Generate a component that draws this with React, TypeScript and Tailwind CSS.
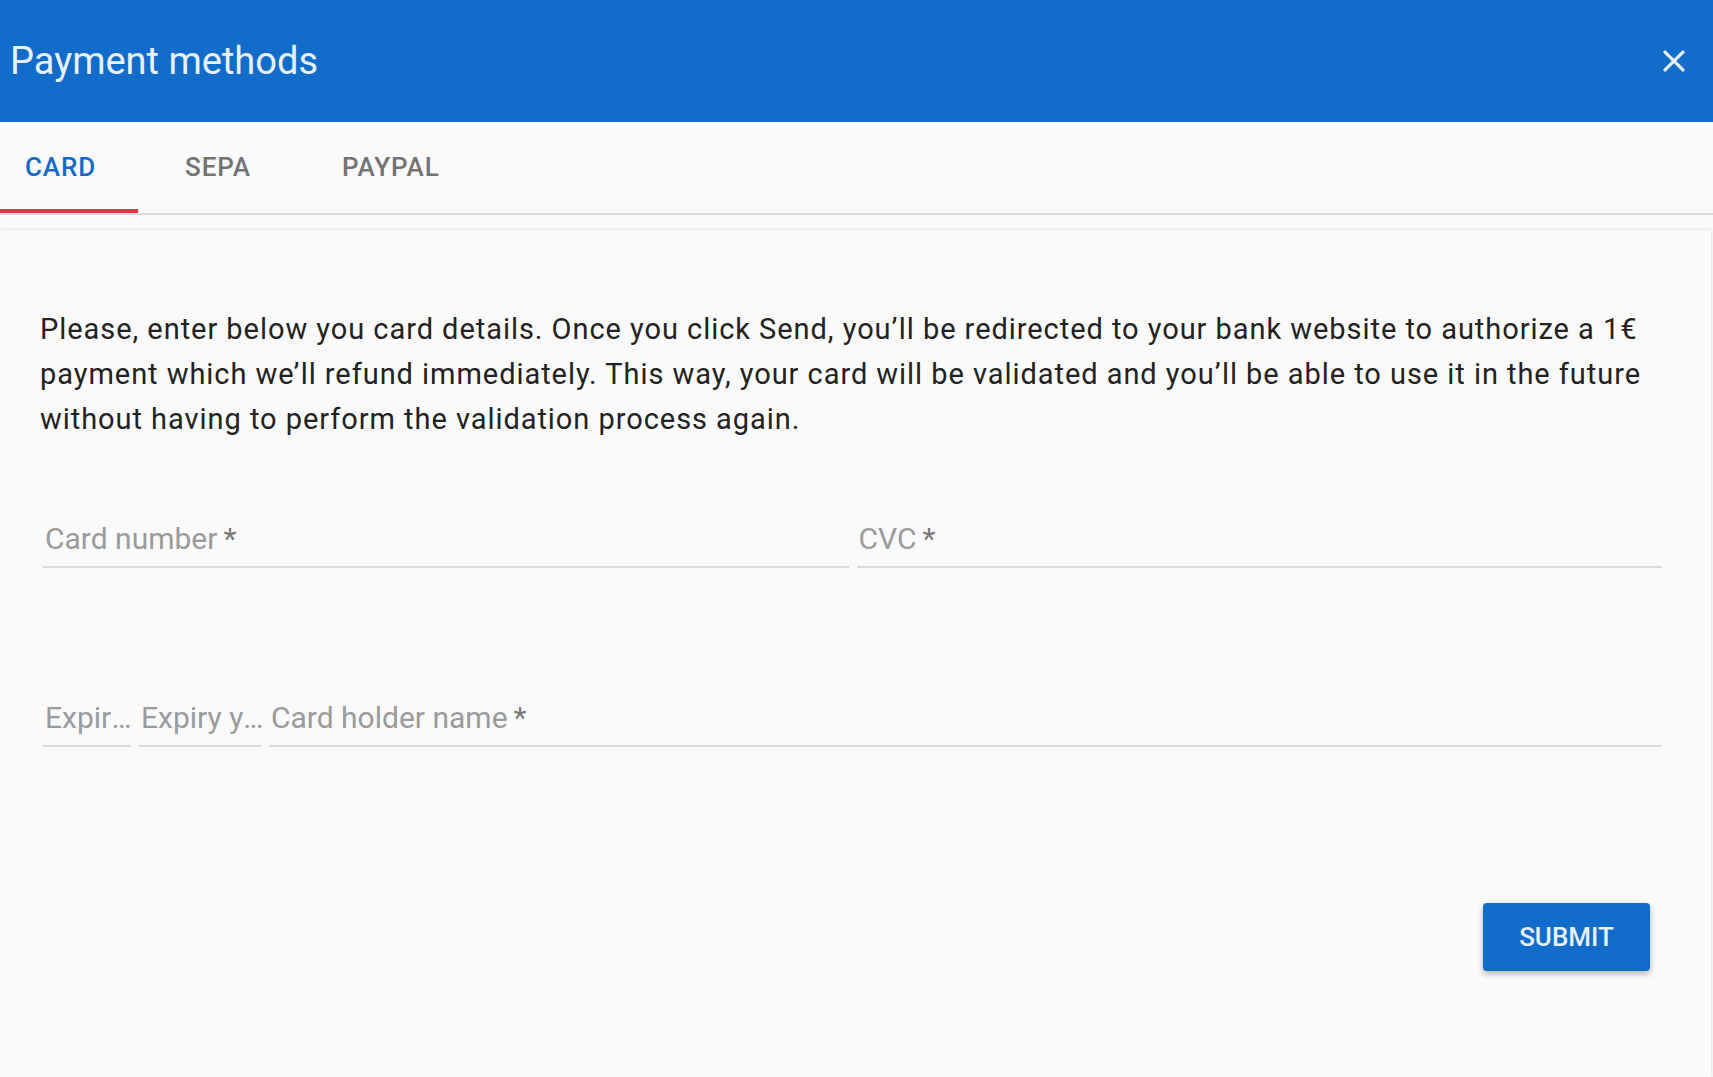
import { useState } from 'react';

const TABS = ['CARD', 'SEPA', 'PAYPAL'];

function CloseIcon() {
  return (
    <svg width="38" height="38" viewBox="0 0 24 24" fill="currentColor">
      <path d="M19 6.41L17.59 5 12 10.59 6.41 5 5 6.41 10.59 12 5 17.59 6.41 19 12 13.41 17.59 19 19 17.59 13.41 12z" />
    </svg>
  );
}

function Field({ label, className = '' }: { label: string; className?: string }) {
  return (
    <div className={`min-w-0 border-b-2 border-[#dadada] ${className}`}>
      <div className="mr-[-4px] truncate pl-[2px] pb-[9px] text-[30px] leading-[36px] text-[#9b9b9b]">
        {label}
        <span className="ml-[6px] text-[#777]">*</span>
      </div>
    </div>
  );
}

export default function App() {
  const [tab, setTab] = useState(0);

  return (
    <div className="min-h-screen bg-[#fafafa] font-['Roboto',sans-serif]">
      {/* Header */}
      <div className="flex h-[122px] items-center justify-between bg-[#126cc9] pl-[10px] pr-[20px]">
        <h1 className="text-[38px] font-normal leading-none text-[#e8f1fb]">Payment methods</h1>
        <button className="text-[#e8f1fb]">
          <CloseIcon />
        </button>
      </div>

      {/* Tabs */}
      <div className="flex h-[93px] border-b-2 border-[#dcdcdc]">
        {TABS.map((t, i) => (
          <button
            key={t}
            onClick={() => setTab(i)}
            className={`relative flex h-full items-center text-[26px] font-medium tracking-[0.9px] ${
              i === 0 ? 'w-[138px] pl-[25px]' : i === 1 ? 'ml-[47px] w-[110px]' : 'ml-[47px]'
            } ${tab === i ? 'text-[#1769c6]' : 'text-[#737373]'}`}
          >
            {t}
            {tab === i && (
              <span className="absolute bottom-0 left-0 h-[4px] w-[138px] bg-[#e23543]" />
            )}
          </button>
        ))}
      </div>

      {/* Card form */}
      <div className="mt-[15px] mr-[2px] min-h-[847px] bg-[#fafafa] shadow-[0_0_3px_rgba(0,0,0,0.18)]">
        <div className="pt-[77px] pl-[40px] pr-[40px]">
          <p className="text-[29px] leading-[45px] tracking-[0.95px] text-[#222]">
            Please, enter below you card details. Once you click Send, you’ll be redirected to your bank website to
            authorize a 1€ payment which we’ll refund immediately. This way, your card will be validated and you’ll be
            able to use it in the future without having to perform the validation process again.
          </p>
        </div>

        <div className="pl-[43px] pr-[49px]">
          <div className="mt-[79px] flex gap-[8px]">
            <Field label="Card number" className="flex-1" />
            <Field label="CVC" className="flex-1" />
          </div>

          <div className="mt-[132px] flex gap-[8px]">
            <Field label="Expiry month" className="w-[88px] shrink-0" />
            <Field label="Expiry year" className="w-[122px] shrink-0" />
            <Field label="Card holder name" className="flex-1" />
          </div>

          <div className="mt-[156px] flex justify-end pr-[12px]">
            <button className="h-[68px] w-[167px] rounded-[4px] bg-[#126cc9] text-[26px] font-medium text-[#e6f0fb] shadow-[0_3px_6px_rgba(0,0,0,0.28)]">
              SUBMIT
            </button>
          </div>
        </div>
      </div>
    </div>
  );
}
